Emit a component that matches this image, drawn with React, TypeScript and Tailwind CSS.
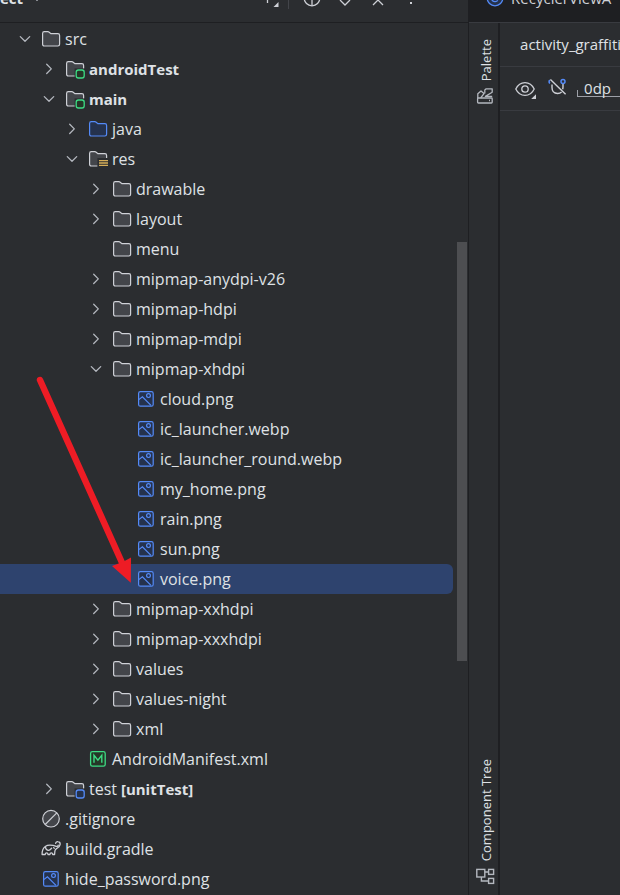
import React from "react";
import clsx from "clsx";

type IconName =
  | "folder"
  | "source"
  | "testModule"
  | "module"
  | "resources"
  | "image"
  | "manifest"
  | "ignored"
  | "gradle";

type Row = {
  name: string;
  tag?: string;
  depth: number;
  icon: IconName;
  open?: boolean;
  bold?: boolean;
  selected?: boolean;
};

const rows: Row[] = [
  { name: "src", depth: 0, icon: "folder", open: true },
  { name: "androidTest", depth: 1, icon: "module", open: false, bold: true },
  { name: "main", depth: 1, icon: "module", open: true, bold: true },
  { name: "java", depth: 2, icon: "source", open: false },
  { name: "res", depth: 2, icon: "resources", open: true },
  { name: "drawable", depth: 3, icon: "folder", open: false },
  { name: "layout", depth: 3, icon: "folder", open: false },
  { name: "menu", depth: 3, icon: "folder" },
  { name: "mipmap-anydpi-v26", depth: 3, icon: "folder", open: false },
  { name: "mipmap-hdpi", depth: 3, icon: "folder", open: false },
  { name: "mipmap-mdpi", depth: 3, icon: "folder", open: false },
  { name: "mipmap-xhdpi", depth: 3, icon: "folder", open: true },
  { name: "cloud.png", depth: 4, icon: "image" },
  { name: "ic_launcher.webp", depth: 4, icon: "image" },
  { name: "ic_launcher_round.webp", depth: 4, icon: "image" },
  { name: "my_home.png", depth: 4, icon: "image" },
  { name: "rain.png", depth: 4, icon: "image" },
  { name: "sun.png", depth: 4, icon: "image" },
  { name: "voice.png", depth: 4, icon: "image", selected: true },
  { name: "mipmap-xxhdpi", depth: 3, icon: "folder", open: false },
  { name: "mipmap-xxxhdpi", depth: 3, icon: "folder", open: false },
  { name: "values", depth: 3, icon: "folder", open: false },
  { name: "values-night", depth: 3, icon: "folder", open: false },
  { name: "xml", depth: 3, icon: "folder", open: false },
  { name: "AndroidManifest.xml", depth: 2, icon: "manifest" },
  { name: "test", tag: "[unitTest]", depth: 1, icon: "testModule", open: false },
  { name: ".gitignore", depth: 0, icon: "ignored" },
  { name: "build.gradle", depth: 0, icon: "gradle" },
  { name: "hide_password.png", depth: 0, icon: "image" },
];

const FOLDER =
  "M1.6 4.4c0-1 .7-1.7 1.7-1.7h3.6c.5 0 .9.2 1.3.5l1.7 1.5h7c1 0 1.7.7 1.7 1.7v8.9c0 1-.7 1.7-1.7 1.7H3.3c-1 0-1.7-.7-1.7-1.7z";

const FolderShape = ({ fill = "#43454a", stroke = "#ced0d6" }) => (
  <path d={FOLDER} fill={fill} stroke={stroke} strokeWidth="1.2" />
);

// Folder with a small rounded square over its bottom right corner
const ModuleShape = ({ fill, stroke }: { fill: string; stroke: string }) => (
  <>
    <FolderShape />
    <rect x="9.6" y="9.4" width="11" height="11" fill="#2b2d30" />
    <rect x="11.2" y="11" width="8" height="8" rx="2.2" fill={fill} stroke={stroke} strokeWidth="1.3" />
  </>
);

const icons: Record<IconName, React.ReactNode> = {
  folder: <FolderShape />,
  source: <FolderShape fill="#25324d" stroke="#548af7" />,
  module: <ModuleShape fill="#253627" stroke="#3ddc84" />,
  testModule: <ModuleShape fill="#25324d" stroke="#548af7" />,
  resources: (
    <>
      <FolderShape />
      <rect x="9.4" y="9" width="11" height="11" fill="#2b2d30" />
      <path d="M11 11.6h9M11 14h9M11 16.4h9" stroke="#d6ae58" strokeWidth="1.3" />
    </>
  ),
  image: (
    <g stroke="#548af7" strokeWidth="1.2" fill="none">
      <rect x="2.6" y="2.6" width="14.6" height="14.6" rx="1.8" fill="#25324d" />
      <circle cx="12.5" cy="6.6" r="1.9" />
      <path d="M2.8 10.6l3.6-2.8 8.6 8.6" />
    </g>
  ),
  manifest: (
    <g stroke="#3ddc84" fill="none">
      <rect x="2.6" y="2.6" width="14.6" height="14.6" rx="1.8" fill="#253627" strokeWidth="1.3" />
      <path d="M6 13.8V6.2l3.9 5 3.9-5v7.6" strokeWidth="1.4" />
    </g>
  ),
  ignored: (
    <g stroke="#ced0d6" strokeWidth="1.2" fill="#43454a">
      <circle cx="10" cy="9.7" r="8.3" />
      <path d="M4.2 15.5L15.8 3.9" />
    </g>
  ),
  gradle: (
    <g stroke="#ced0d6" strokeWidth="1.3" fill="none" strokeLinecap="round" strokeLinejoin="round">
      <path d="M14.6 4.3c.4-1.1 1.4-1.8 2.5-1.6 1.4.2 2.2 1.4 2 2.9-.3 2-1.9 3.2-3.6 4-.9.5-1.4 1.3-1.6 2.4l-.3 3.5h-1.9c-.1-1.1-.7-1.7-1.4-1.7s-1.3.6-1.4 1.7H7c-.1-1.1-.7-1.7-1.4-1.7s-1.3.6-1.4 1.7H1.1c-.1-3.4.8-6.3 3.2-8 1.4-1 3-1.3 4.6-1.3 2.2 0 4 .2 5.6.9 1.3.6 2.6.2 2.7-1" />
      <path d="M4.4 8.1c.4 1.9 1.6 3.3 3.2 3.2 1.3-.1 2-1 3-2.1" />
      <path d="M12.6 8.7l.8.5" />
    </g>
  ),
};

const Icon = ({ children }: { children: React.ReactNode }) => (
  <svg viewBox="0 0 20 20" aria-hidden="true" className="size-5 shrink-0 overflow-visible">
    {children}
  </svg>
);

const Chevron = ({ open }: { open: boolean }) => (
  <svg
    viewBox="0 0 16 16"
    aria-hidden="true"
    className="size-4 shrink-0"
    fill="none"
    stroke="#b4b8bf"
    strokeWidth="1.3"
    strokeLinecap="round"
    strokeLinejoin="round"
  >
    <path d={open ? "M3.3 5.6L8 10.2l4.7-4.6" : "M5.7 3.3l4.6 4.6-4.6 4.6"} />
  </svg>
);

const TreeRow = ({ row }: { row: Row }) => (
  <li role="treeitem" aria-expanded={row.open} aria-selected={!!row.selected}>
    <button
      type="button"
      className={clsx(
        "flex h-[30px] w-full items-center rounded-r-md text-left whitespace-nowrap",
        row.selected && "bg-[#2e436e]"
      )}
      style={{ paddingLeft: Math.round(17 + row.depth * 23.7) }}
    >
      <span className="mr-2 flex w-4 shrink-0">
        {row.open !== undefined && <Chevron open={row.open} />}
      </span>
      <Icon>{icons[row.icon]}</Icon>
      <span className={clsx("ml-1", row.bold ? "text-[15px] font-bold" : "text-base")}>
        {row.name}
        {row.tag && <b className="text-[15px]"> {row.tag}</b>}
      </span>
    </button>
  </li>
);

const ToolButton = ({ label, children }: { label: string; children: React.ReactNode }) => (
  <button type="button" aria-label={label} className="shrink-0">
    <Icon>{children}</Icon>
  </button>
);

const ProjectHeader = () => (
  <header className="flex h-[23px] shrink-0 items-end overflow-hidden border-b border-[#1e1f22]">
    <div className="flex h-12 w-full items-center pr-[47px]">
      <button type="button" className="flex items-center gap-1.5 font-bold">
        ect
        <Chevron open />
      </button>
      <div className="ml-auto flex items-center gap-[13px]">
        <div className="flex items-center gap-2">
          <ToolButton label="Options">
            <path d="M7.5 4v11" stroke="#ced0d6" strokeWidth="1.3" />
            <path d="M18.5 14v5h-5z" fill="#ced0d6" />
          </ToolButton>
          <span className="h-[22px] w-px bg-[#43454a]" />
        </div>
        <ToolButton label="Select opened file">
          <g stroke="#ced0d6" strokeWidth="1.3" fill="none">
            <circle cx="10" cy="10" r="7.8" />
            <path d="M10 2v5M10 12v5.8M2 10h5M13 10h5" />
          </g>
        </ToolButton>
        <ToolButton label="Expand all">
          <path d="M5 7l5-5 5 5M5 12l5 5 5-5" stroke="#ced0d6" strokeWidth="1.3" fill="none" />
        </ToolButton>
        <ToolButton label="Collapse all">
          <path d="M5 3l5 5 5-5M5 17l5-5 5 5" stroke="#ced0d6" strokeWidth="1.3" fill="none" />
        </ToolButton>
        <ToolButton label="More">
          <path d="M9 4h2v2H9zM9 9h2v2H9zM9 14h2v2H9z" fill="#ced0d6" />
        </ToolButton>
      </div>
    </div>
  </header>
);

const ProjectPanel = () => (
  <section className="flex w-[75.5%] shrink-0 flex-col">
    <ProjectHeader />
    <div className="flex flex-1 pt-px">
      <ul role="tree" className="flex-1">
        {rows.map((row) => (
          <TreeRow key={row.name} row={row} />
        ))}
      </ul>
      <div className="w-[15px] pl-1">
        <div className="mt-[218px] h-[419px] w-2.5 bg-[#4d4e51]" />
      </div>
    </div>
  </section>
);

const RailButton = ({ label, children }: { label: string; children: React.ReactNode }) => (
  <button type="button" className="flex flex-col items-center gap-1.5 text-[13px] leading-5">
    <span className="rotate-180 [writing-mode:vertical-rl]">{label}</span>
    <Icon>{children}</Icon>
  </button>
);

const Rail = () => (
  <nav className="flex w-[31px] shrink-0 flex-col items-center justify-between border-r-2 border-[#1e1f22] pt-4 pb-2 pl-1">
    <RailButton label="Palette">
      <g stroke="#b4b8bf" strokeWidth="1.3" fill="none" strokeLinejoin="round">
        <rect x="1.6" y="11" width="14.6" height="5" rx="0.8" />
        <path d="M13 13.5h1" />
        <path d="M1.8 11V6.8L5 4l3 2.6L4.6 11" />
        <path d="M8.8 6.4V3l1.4-1.2h6v3.400L9.400 9.400h6.800" />
      </g>
    </RailButton>
    <RailButton label="Component Tree">
      <g stroke="#b4b8bf" strokeWidth="1.4" fill="none">
        <rect x="0.8" y="2.4" width="8" height="7.6" />
        <rect x="12.6" y="2.4" width="5" height="5" />
        <rect x="12.6" y="11.4" width="5" height="5" />
        <path d="M8.8 5h3.8M5.4 10v4h7.2" />
      </g>
    </RailButton>
  </nav>
);

const Editor = () => (
  <main className="flex min-w-0 flex-1 flex-col overflow-hidden border-l border-[#1e1f22]">
    <div className="flex h-[23px] shrink-0 items-end overflow-hidden border-b border-[#393b40] bg-[#1e1f22]">
      <button type="button" className="flex h-12 items-center gap-1.5 pl-4 text-[#ced0d6]">
        <Icon>
          <circle cx="10" cy="10" r="7.8" fill="#25324d" stroke="#548af7" strokeWidth="1.3" />
          <path d="M12.8 7.8a3.6 3.6 0 1 0 0 4.6" fill="none" stroke="#548af7" strokeWidth="1.3" />
        </Icon>
        RecyclerViewA
      </button>
    </div>
    <div className="flex flex-1">
      <Rail />
      <div className="min-w-0 flex-1 overflow-hidden whitespace-nowrap">
        <div className="flex h-11 items-center border-b border-[#393b40] pl-5">
          <button type="button">activity_graffiti</button>
        </div>
        <div className="flex h-11 items-center border-b border-[#393b40] pl-[15px]">
          <ToolButton label="View options">
            <g stroke="#ced0d6" strokeWidth="1.3" fill="none">
              <path d="M.8 10C2.8 5.8 6 3.6 10 3.6S17.2 5.8 19.2 10c-2 4.2-5.2 6.4-9.2 6.4S2.8 14.2.8 10z" />
              <circle cx="10" cy="10" r="3.2" />
            </g>
            <path d="M21 15.2V20h-4.8z" fill="#ced0d6" />
          </ToolButton>
          <div className="ml-3">
            <ToolButton label="Autoconnect">
              <g stroke="#ced0d6" strokeWidth="1.4" fill="none">
                <path d="M5 8.6v3c0 3.6 2.3 5.9 5.6 5.9 1.6 0 3-.5 4-1.500M16 8v3c0 .9-.1 1.6-.4 2.200" />
                <path d="M3.400 3.600l15.200 14.600" />
              </g>
              <path d="M3 7.400a2 2 0 0 1-.2-3.200" stroke="#548af7" strokeWidth="1.6" fill="none" />
              <circle cx="16" cy="5.400" r="2" stroke="#548af7" strokeWidth="1.5" fill="none" />
            </ToolButton>
          </div>
          <button type="button" className="relative ml-2.5 flex-1 border-b border-[#9da0a8] pl-[7px] text-left leading-4">
            <span className="absolute bottom-0 left-0 h-1.5 w-px bg-[#9da0a8]" />
            0dp
          </button>
        </div>
      </div>
    </div>
  </main>
);

// Red pointer drawn over the tree, ending at the selected file
const Arrow = () => (
  <svg
    viewBox="0 0 140 600"
    aria-hidden="true"
    className="pointer-events-none absolute top-0 left-0 h-[600px] w-[140px]"
  >
    <path d="M40 380L123.5 566" stroke="#ee1c25" strokeWidth="6.4" strokeLinecap="round" />
    <path d="M130.8 582.8L112 566l8.5-3.2 5-2.2 5.5-3.2z" fill="#ee1c25" />
  </svg>
);

export default function App() {
  return (
    <div className="relative flex min-h-screen overflow-hidden bg-[#2b2d30] font-['Open_Sans',sans-serif] text-[15px] text-[#dfe1e5]">
      <ProjectPanel />
      <Editor />
      <Arrow />
    </div>
  );
}
